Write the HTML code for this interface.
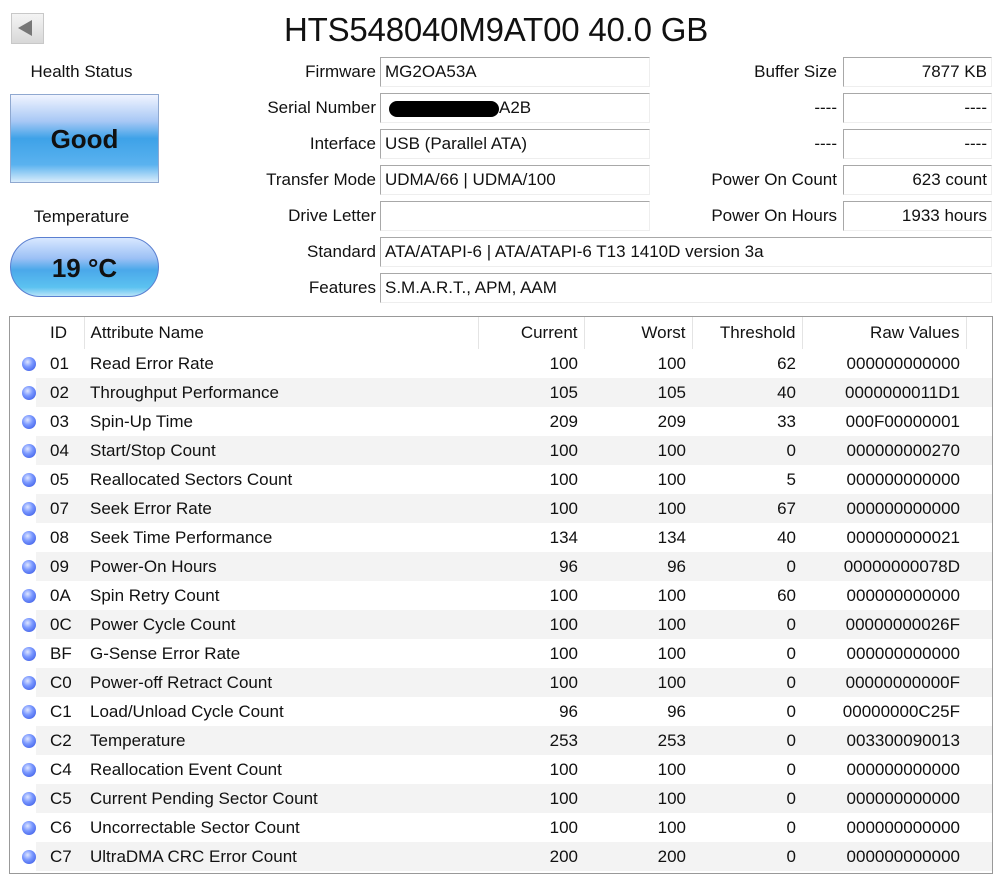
<!DOCTYPE html>
<html><head><meta charset="utf-8"><style>
*{margin:0;padding:0;box-sizing:border-box}
body{width:1000px;height:882px;background:#fff;font-family:"Liberation Sans","DejaVu Sans",sans-serif;color:#111;position:relative;overflow:hidden;font-size:17px}
.a{position:absolute;white-space:nowrap}
.lbl{text-align:right;line-height:30px;height:30px}
.fld{height:30px;line-height:28px;border-top:1px solid #a8a8a8;border-left:1px solid #a8a8a8;border-bottom:1px solid #eee;border-right:1px solid #eee;padding:0 4px}
.r{text-align:right}
table{border-collapse:collapse;position:absolute;left:10px;top:317px;width:982px;font-size:17px;table-layout:fixed}
td{height:29px;padding:0 6px;white-space:nowrap;overflow:hidden}
td.i{padding-left:14px}
tr.h td{height:32px;vertical-align:middle}
td.n{text-align:right}
tr.e td.s{background:#f3f3f3}
.dot{width:14px;height:14px;border-radius:50%;background:radial-gradient(circle at 40% 35%,#dfe6ff 0,#7a98ff 40%,#2f4fe0 100%)}
td.d{padding:0 0 0 6px}
td.d .dot{margin-left:6px}
</style></head><body>
<div class="a" style="left:11px;top:13px;width:33px;height:31px;background:linear-gradient(#f4f4f4,#d8d8d8);border:1px solid #c8c8c8"></div>
<div class="a" style="left:18px;top:20px;width:0;height:0;border-top:8px solid transparent;border-bottom:8px solid transparent;border-right:14px solid #777"></div>
<div class="a" style="left:284px;top:8px;font-size:33px;line-height:44px;letter-spacing:-0.2px">HTS548040M9AT00 40.0 GB</div>

<div class="a" style="left:10px;top:62px;width:143px;text-align:center">Health Status</div>
<div class="a" style="left:10px;top:94px;width:149px;height:89px;border:1px solid #8fa8d0;background:linear-gradient(#f0f4ff 0%,#a8c8f5 30%,#3ea2e8 50%,#5ab2ef 80%,#d8ecfb 100%);text-align:center;line-height:88px;font-weight:bold;font-size:26px">Good</div>
<div class="a" style="left:10px;top:207px;width:143px;text-align:center">Temperature</div>
<div class="a" style="left:10px;top:237px;width:149px;height:60px;border:1px solid #5a7fd0;border-radius:30px;background:linear-gradient(#d8e8ff 0%,#9cc0f5 35%,#4aa8ea 55%,#5cc2f0 85%,#b8e4f8 100%);text-align:center;line-height:60px;font-weight:bold;font-size:26px">19 °C</div>

<div class="a lbl" style="left:200px;width:176px;top:57px">Firmware</div>
<div class="a lbl" style="left:200px;width:176px;top:93px">Serial Number</div>
<div class="a lbl" style="left:200px;width:176px;top:129px">Interface</div>
<div class="a lbl" style="left:200px;width:176px;top:165px">Transfer Mode</div>
<div class="a lbl" style="left:200px;width:176px;top:201px">Drive Letter</div>
<div class="a lbl" style="left:200px;width:176px;top:237px">Standard</div>
<div class="a lbl" style="left:200px;width:176px;top:273px">Features</div>

<div class="a fld" style="left:380px;width:270px;top:57px">MG2OA53A</div>
<div class="a fld" style="left:380px;width:270px;top:93px"><span style="display:inline-block;width:110px;height:16px;background:#000;border-radius:8px;vertical-align:middle;margin-left:4px"></span>A2B</div>
<div class="a fld" style="left:380px;width:270px;top:129px">USB (Parallel ATA)</div>
<div class="a fld" style="left:380px;width:270px;top:165px">UDMA/66 | UDMA/100</div>
<div class="a fld" style="left:380px;width:270px;top:201px"></div>
<div class="a fld" style="left:380px;width:612px;top:237px">ATA/ATAPI-6 | ATA/ATAPI-6 T13 1410D version 3a</div>
<div class="a fld" style="left:380px;width:612px;top:273px">S.M.A.R.T., APM, AAM</div>

<div class="a lbl" style="left:660px;width:177px;top:57px">Buffer Size</div>
<div class="a lbl" style="left:660px;width:177px;top:93px">----</div>
<div class="a lbl" style="left:660px;width:177px;top:129px">----</div>
<div class="a lbl" style="left:660px;width:177px;top:165px">Power On Count</div>
<div class="a lbl" style="left:660px;width:177px;top:201px">Power On Hours</div>
<div class="a fld r" style="left:843px;width:149px;top:57px">7877 KB</div>
<div class="a fld r" style="left:843px;width:149px;top:93px">----</div>
<div class="a fld r" style="left:843px;width:149px;top:129px">----</div>
<div class="a fld r" style="left:843px;width:149px;top:165px">623 count</div>
<div class="a fld r" style="left:843px;width:149px;top:201px">1933 hours</div>

<div class="a" style="left:9px;top:316px;width:984px;height:558px;border:1px solid #999"></div>
<table>
<colgroup><col style="width:26px"><col style="width:48px"><col style="width:394px"><col style="width:106px"><col style="width:108px"><col style="width:110px"><col style="width:164px"><col style="width:26px"></colgroup>
<tr class="h"><td></td><td class="i" style="border-right:1px solid #e4e4e4">ID</td><td style="border-right:1px solid #e4e4e4">Attribute Name</td><td class="n" style="border-right:1px solid #e4e4e4">Current</td><td class="n" style="border-right:1px solid #e4e4e4">Worst</td><td class="n" style="border-right:1px solid #e4e4e4">Threshold</td><td class="n" style="border-right:1px solid #e4e4e4">Raw Values</td><td></td></tr>
<tr><td class="d"><div class="dot"></div></td><td class="s i">01</td><td class="s">Read Error Rate</td><td class="n s">100</td><td class="n s">100</td><td class="n s">62</td><td class="n s">000000000000</td><td class="s"></td></tr>
<tr class="e"><td class="d"><div class="dot"></div></td><td class="s i">02</td><td class="s">Throughput Performance</td><td class="n s">105</td><td class="n s">105</td><td class="n s">40</td><td class="n s">0000000011D1</td><td class="s"></td></tr>
<tr><td class="d"><div class="dot"></div></td><td class="s i">03</td><td class="s">Spin-Up Time</td><td class="n s">209</td><td class="n s">209</td><td class="n s">33</td><td class="n s">000F00000001</td><td class="s"></td></tr>
<tr class="e"><td class="d"><div class="dot"></div></td><td class="s i">04</td><td class="s">Start/Stop Count</td><td class="n s">100</td><td class="n s">100</td><td class="n s">0</td><td class="n s">000000000270</td><td class="s"></td></tr>
<tr><td class="d"><div class="dot"></div></td><td class="s i">05</td><td class="s">Reallocated Sectors Count</td><td class="n s">100</td><td class="n s">100</td><td class="n s">5</td><td class="n s">000000000000</td><td class="s"></td></tr>
<tr class="e"><td class="d"><div class="dot"></div></td><td class="s i">07</td><td class="s">Seek Error Rate</td><td class="n s">100</td><td class="n s">100</td><td class="n s">67</td><td class="n s">000000000000</td><td class="s"></td></tr>
<tr><td class="d"><div class="dot"></div></td><td class="s i">08</td><td class="s">Seek Time Performance</td><td class="n s">134</td><td class="n s">134</td><td class="n s">40</td><td class="n s">000000000021</td><td class="s"></td></tr>
<tr class="e"><td class="d"><div class="dot"></div></td><td class="s i">09</td><td class="s">Power-On Hours</td><td class="n s">96</td><td class="n s">96</td><td class="n s">0</td><td class="n s">00000000078D</td><td class="s"></td></tr>
<tr><td class="d"><div class="dot"></div></td><td class="s i">0A</td><td class="s">Spin Retry Count</td><td class="n s">100</td><td class="n s">100</td><td class="n s">60</td><td class="n s">000000000000</td><td class="s"></td></tr>
<tr class="e"><td class="d"><div class="dot"></div></td><td class="s i">0C</td><td class="s">Power Cycle Count</td><td class="n s">100</td><td class="n s">100</td><td class="n s">0</td><td class="n s">00000000026F</td><td class="s"></td></tr>
<tr><td class="d"><div class="dot"></div></td><td class="s i">BF</td><td class="s">G-Sense Error Rate</td><td class="n s">100</td><td class="n s">100</td><td class="n s">0</td><td class="n s">000000000000</td><td class="s"></td></tr>
<tr class="e"><td class="d"><div class="dot"></div></td><td class="s i">C0</td><td class="s">Power-off Retract Count</td><td class="n s">100</td><td class="n s">100</td><td class="n s">0</td><td class="n s">00000000000F</td><td class="s"></td></tr>
<tr><td class="d"><div class="dot"></div></td><td class="s i">C1</td><td class="s">Load/Unload Cycle Count</td><td class="n s">96</td><td class="n s">96</td><td class="n s">0</td><td class="n s">00000000C25F</td><td class="s"></td></tr>
<tr class="e"><td class="d"><div class="dot"></div></td><td class="s i">C2</td><td class="s">Temperature</td><td class="n s">253</td><td class="n s">253</td><td class="n s">0</td><td class="n s">003300090013</td><td class="s"></td></tr>
<tr><td class="d"><div class="dot"></div></td><td class="s i">C4</td><td class="s">Reallocation Event Count</td><td class="n s">100</td><td class="n s">100</td><td class="n s">0</td><td class="n s">000000000000</td><td class="s"></td></tr>
<tr class="e"><td class="d"><div class="dot"></div></td><td class="s i">C5</td><td class="s">Current Pending Sector Count</td><td class="n s">100</td><td class="n s">100</td><td class="n s">0</td><td class="n s">000000000000</td><td class="s"></td></tr>
<tr><td class="d"><div class="dot"></div></td><td class="s i">C6</td><td class="s">Uncorrectable Sector Count</td><td class="n s">100</td><td class="n s">100</td><td class="n s">0</td><td class="n s">000000000000</td><td class="s"></td></tr>
<tr class="e"><td class="d"><div class="dot"></div></td><td class="s i">C7</td><td class="s">UltraDMA CRC Error Count</td><td class="n s">200</td><td class="n s">200</td><td class="n s">0</td><td class="n s">000000000000</td><td class="s"></td></tr>
</table>
</body></html>
